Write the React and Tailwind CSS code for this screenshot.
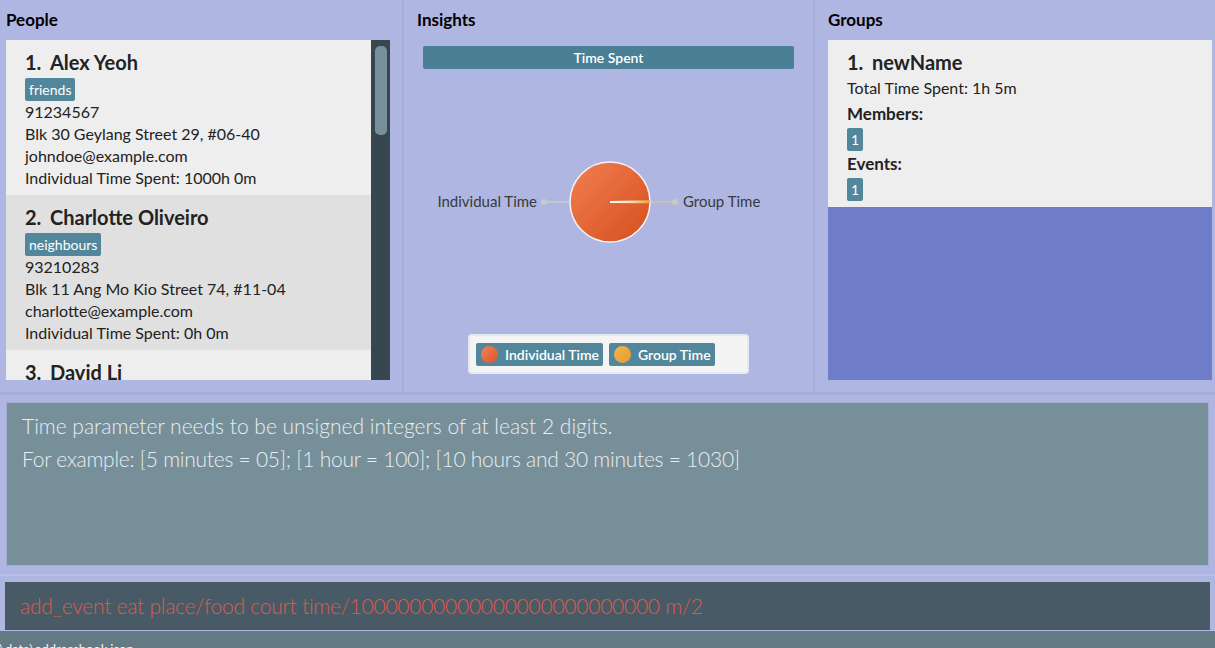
import React from 'react';

const font = "font-['Segoe_UI','Lato','Open_Sans',sans-serif]";

const people = [
    { name: 'Alex Yeoh', tag: 'friends', phone: '91234567', address: 'Blk 30 Geylang Street 29, #06-40', email: 'johndoe@example.com', time: '1000h 0m' },
    { name: 'Charlotte Oliveiro', tag: 'neighbours', phone: '93210283', address: 'Blk 11 Ang Mo Kio Street 74, #11-04', email: 'charlotte@example.com', time: '0h 0m' },
    { name: 'David Li', tag: 'family', phone: '87438807', address: 'Blk 436 Serangoon Gardens Street 26, #16-43', email: 'lidavid@example.com', time: '0h 0m' },
];

const Tag = ({ children }) => (
    <span className="inline-block h-[23px] bg-[#52879b] text-white text-[14px] leading-[23px] px-[4px] rounded-[2px]">{children}</span>
);

const PersonCard = ({ p, i }) => (
    <div className={`h-[155px] shrink-0 pl-[19px] pt-[9px] ${i % 2 === 0 ? 'bg-[#eeeeee]' : 'bg-[#e0e0e0]'}`}>
        <div className="text-[20px] font-bold text-[#222] leading-[26px] flex">
            <span className="w-[25px]">{i + 1}.</span>
            <span>{p.name}</span>
        </div>
        <div className="mt-[3px] h-[23px] flex"><Tag>{p.tag}</Tag></div>
        <div className="text-[16px] text-[#222] leading-[22px]">
            <div>{p.phone}</div>
            <div>{p.address}</div>
            <div>{p.email}</div>
            <div>Individual Time Spent: {p.time}</div>
        </div>
    </div>
);

const PieChart = () => (
    <svg width="372" height="265" viewBox="0 0 372 265">
        <defs>
            <linearGradient id="pieFill" x1="0" y1="0" x2="1" y2="1">
                <stop offset="0" stopColor="#f17f52" />
                <stop offset="1" stopColor="#d64e1c" />
            </linearGradient>
            <linearGradient id="slice" x1="0" y1="0" x2="1" y2="0">
                <stop offset="0" stopColor="#ffffff" />
                <stop offset="0.5" stopColor="#fbe3b8" />
                <stop offset="1" stopColor="#e9a63c" />
            </linearGradient>
        </defs>
        <line x1="121" y1="133" x2="147" y2="133" stroke="#cfcfc8" strokeWidth="1.2" />
        <circle cx="121" cy="133" r="2.8" fill="#c5c8d8" stroke="#c9c9c2" strokeWidth="1" />
        <line x1="227" y1="133" x2="252" y2="133" stroke="#d8c9a0" strokeWidth="1.2" />
        <circle cx="252" cy="133" r="2.8" fill="#c5c8d8" stroke="#cfc7ab" strokeWidth="1" />
        <circle cx="187" cy="133" r="40" fill="url(#pieFill)" stroke="#f4f4f4" strokeWidth="1.5" />
        <polygon points="187,132 227,131.2 227,134.2 187,134" fill="url(#slice)" />
        <text x="114" y="138" textAnchor="end" fontSize="15" fill="#3a3a3a" fontFamily="Segoe UI, Lato, sans-serif">Individual Time</text>
        <text x="260" y="138" fontSize="15" fill="#3a3a3a" fontFamily="Segoe UI, Lato, sans-serif">Group Time</text>
    </svg>
);

const LegendItem = ({ color, label }) => (
    <div className="h-[23px] flex items-center bg-[#52879b] rounded-[2px] pl-[5px] pr-[4px] gap-[7px]">
        <span className={`w-[17px] h-[17px] rounded-full ${color}`} />
        <span className="text-white text-[14px] font-semibold">{label}</span>
    </div>
);

export default function App() {
    return (
        <div className={`w-[1215px] h-[648px] overflow-hidden flex flex-col bg-[#afb6e2] ${font}`}>
            <div className="h-[392px] flex shrink-0">
                {/* People */}
                <div className="w-[402px] pl-[6px] pr-[12px] flex flex-col">
                    <div className="h-[40px] flex items-center text-[17px] font-bold text-black">People</div>
                    <div className="h-[340px] flex">
                        <div className="flex-1 flex flex-col overflow-hidden">
                            {people.map((p, i) => <PersonCard key={p.name} p={p} i={i} />)}
                        </div>
                        <div className="w-[19px] bg-[#37474f] pl-[4px] pr-[3px] pt-[6px]">
                            <div className="h-[89px] rounded-[5px] bg-[#78909c]" />
                        </div>
                    </div>
                </div>
                <div className="w-[2px] bg-[#a6addb]" />
                {/* Insights */}
                <div className="w-[409px] px-[19px] flex flex-col">
                    <div className="h-[40px] flex items-center -ml-[6px] text-[17px] font-bold text-black">Insights</div>
                    <div className="mt-[6px] h-[23px] rounded-[2px] bg-[#4a7f96] flex items-center justify-center text-white text-[14px] font-semibold">Time Spent</div>
                    <PieChart />
                    <div className="self-center w-[281px] h-[40px] bg-[#f4f4f4] border-2 border-[#e6e8f2] rounded-[4px] flex items-center gap-[6px] pl-[6px]">
                        <LegendItem color="bg-gradient-to-br from-[#f08358] to-[#d9542a]" label="Individual Time" />
                        <LegendItem color="bg-gradient-to-br from-[#f3b64a] to-[#e39a2c]" label="Group Time" />
                    </div>
                </div>
                <div className="w-[2px] bg-[#a6addb]" />
                {/* Groups */}
                <div className="flex-1 pl-[13px] pr-[3px] flex flex-col">
                    <div className="h-[40px] flex items-center text-[17px] font-bold text-black">Groups</div>
                    <div className="h-[340px] bg-[#6f7cc9] flex flex-col">
                        <div className="h-[167px] bg-[#eeeeee] pl-[19px] pt-[9px] text-[#222]">
                            <div className="text-[20px] font-bold leading-[26px] flex">
                                <span className="w-[25px]">1.</span>
                                <span>newName</span>
                            </div>
                            <div className="text-[16px] leading-[26px]">Total Time Spent: 1h 5m</div>
                            <div className="text-[17px] font-bold leading-[26px]">Members:</div>
                            <div className="h-[24px] flex items-start pt-[1px]"><Tag>1</Tag></div>
                            <div className="text-[17px] font-bold leading-[26px]">Events:</div>
                            <div className="h-[24px] flex items-start pt-[1px]"><Tag>1</Tag></div>
                        </div>
                    </div>
                </div>
            </div>
            <div className="h-[3px] shrink-0 bg-[#a6addb]" />
            {/* Result display */}
            <div className="h-[179px] shrink-0 px-[6px] pt-[7px] pb-[8px] flex flex-col">
                <div className="flex-1 bg-[#778f99] border border-[#a3acd4] px-[15px] pt-[6px] text-[21px] font-light leading-[33px] text-[#e8eef0]">
                    <div>Time parameter needs to be unsigned integers of at least 2 digits.</div>
                    <div className="tracking-[-0.25px]">For example: [5 minutes = 05]; [1 hour = 100]; [10 hours and 30 minutes = 1030]</div>
                </div>
            </div>
            <div className="h-[2px] shrink-0 bg-[#b8bfe8]" />
            {/* Command box */}
            <div className="h-[54px] shrink-0 px-[5px] pt-[6px] flex flex-col">
                <div className="flex-1 bg-[#485a66] flex items-center px-[15px] text-[21px] tracking-[-0.25px] font-light text-[#df5a48]">
                    add_event eat place/food court time/10000000000000000000000000 m/2
                </div>
            </div>
            <div className="h-[1px] shrink-0 bg-[#b3bae6]" />
            <div className="h-[17px] shrink-0 overflow-hidden bg-[#637a84] text-[#f0f4f5] text-[13px] leading-[20px] pt-[8px] -ml-[4px]">.\data\addressbook.json</div>
        </div>
    );
}
